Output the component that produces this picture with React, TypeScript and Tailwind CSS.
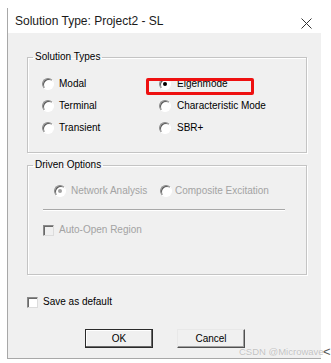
import type { ReactNode } from 'react'

function Radio({ checked = false, disabled = false }: { checked?: boolean; disabled?: boolean }) {
  return (
    <span className="relative shrink-0 w-[12px] h-[12px] rounded-full border border-t-[#8a8a8a] border-l-[#8a8a8a] border-b-white border-r-white bg-white shadow-[inset_1px_1px_0_#5a5a5a]">
      {checked && (
        <span
          className={`absolute left-[3px] top-[3px] w-[4px] h-[4px] rounded-full ${
            disabled ? 'bg-[#a0a0a0]' : 'bg-black'
          }`}
        />
      )}
    </span>
  )
}

function Check({ disabled = false }: { disabled?: boolean }) {
  return (
    <span
      className={`shrink-0 w-[11px] h-[11px] border border-t-[#8a8a8a] border-l-[#8a8a8a] border-b-[#dcdcdc] border-r-[#dcdcdc] shadow-[inset_1px_1px_0_#6a6a6a] ${
        disabled ? 'bg-[#f0f0f0]' : 'bg-white'
      }`}
    />
  )
}

function Option({ children, checked, disabled, gap = 'gap-[5px]' }: { children: ReactNode; checked?: boolean; disabled?: boolean; gap?: string }) {
  return (
    <div className={`flex items-center h-[22px] ${gap}`}>
      <Radio checked={checked} disabled={disabled} />
      <span className={disabled ? 'text-[#a3a3a3]' : 'text-black'}>{children}</span>
    </div>
  )
}

export default function App() {
  return (
    <div className="relative w-[331px] h-[363px] bg-white overflow-hidden font-['Liberation_Sans',Arial,sans-serif] text-[10px] leading-[12px] text-black">
      <div className="mt-[8px] ml-[7px] w-[314px] border-l border-[#a8a8a8]">
        {/* Title bar */}
        <div className="h-[25px] bg-white flex items-start justify-between pl-[7px] pr-[9px] pt-[5px]">
          <span className="text-[12px] leading-[16px] text-[#1a1a1a]">Solution Type: Project2 - SL</span>
          <svg width="11" height="11" viewBox="0 0 11 11" className="mt-[5px]">
            <path d="M0.5 0.5 L10.5 10.5 M10.5 0.5 L0.5 10.5" stroke="#333" strokeWidth="1" />
          </svg>
        </div>

        {/* Body */}
        <div className="h-[326px] bg-[#f0f0f0] border-b border-[#a8a8a8] pl-[19px] pt-[18px]">
          <fieldset className="w-[280px] h-[102px] border border-[#c4c4c4] shadow-[inset_1px_1px_0_#fff,1px_1px_0_#fff]">
            <legend className="ml-[5px] px-[2px]">Solution Types</legend>
            <div className="grid grid-cols-[117px_1fr] pl-[14px] pt-[10px]">
              <Option>Modal</Option>
              <div className="relative">
                <Option checked gap="gap-[6px]">Eigenmode</Option>
                <div className="absolute left-[-13px] top-[5px] w-[108px] h-[17px] border-[3px] border-[#ee1010] rounded-[2px]" />
              </div>
              <Option>Terminal</Option>
              <Option gap="gap-[6px]">Characteristic Mode</Option>
              <Option>Transient</Option>
              <Option gap="gap-[6px]">SBR+</Option>
            </div>
          </fieldset>

          <fieldset className="mt-[6px] w-[280px] h-[116px] border border-[#c4c4c4] shadow-[inset_1px_1px_0_#fff,1px_1px_0_#fff]">
            <legend className="ml-[5px] px-[2px]">Driven Options</legend>
            <div className="flex pl-[26px] pt-[9px]">
              <div className="w-[106px]">
                <Option checked disabled>Network Analysis</Option>
              </div>
              <Option disabled gap="gap-[3px]">Composite Excitation</Option>
            </div>
            <div className="mt-[7px] ml-[15px] w-[242px] border-t border-[#a8a8a8] border-b border-b-white" />
            <div className="mt-[8px] ml-[15px] flex items-center h-[22px] gap-[5px]">
              <Check disabled />
              <span className="text-[#a3a3a3]">Auto-Open Region</span>
            </div>
          </fieldset>

          <div className="mt-[16px] flex items-center h-[22px] gap-[5px]">
            <Check />
            <span>Save as default</span>
          </div>

          <div className="mt-[16px] ml-[58px] flex gap-[24px]">
            <button className="w-[68px] h-[19px] bg-[#f0f0f0] border border-[#2a2a2a] shadow-[inset_-1px_-1px_0_#6a6a6a,inset_1px_1px_0_#fff] text-[10px] leading-[12px]">
              OK
            </button>
            <button className="w-[68px] h-[19px] bg-[#f0f0f0] border border-t-[#e8e8e8] border-l-[#e8e8e8] border-b-[#505050] border-r-[#505050] shadow-[inset_-1px_-1px_0_#a0a0a0] text-[10px] leading-[12px]">
              Cancel
            </button>
          </div>
        </div>
      </div>

      {/* watermark */}
      <span className="absolute left-[239px] top-[346px] whitespace-nowrap text-[9.5px] leading-[12px] text-[#c2c2c2] [text-shadow:0_0_1px_#fff]">
        CSDN @Microwave
      </span>
      <span className="absolute left-[323px] top-[345px] text-[13px] leading-[13px] text-[#555]">&lt;</span>
    </div>
  )
}
